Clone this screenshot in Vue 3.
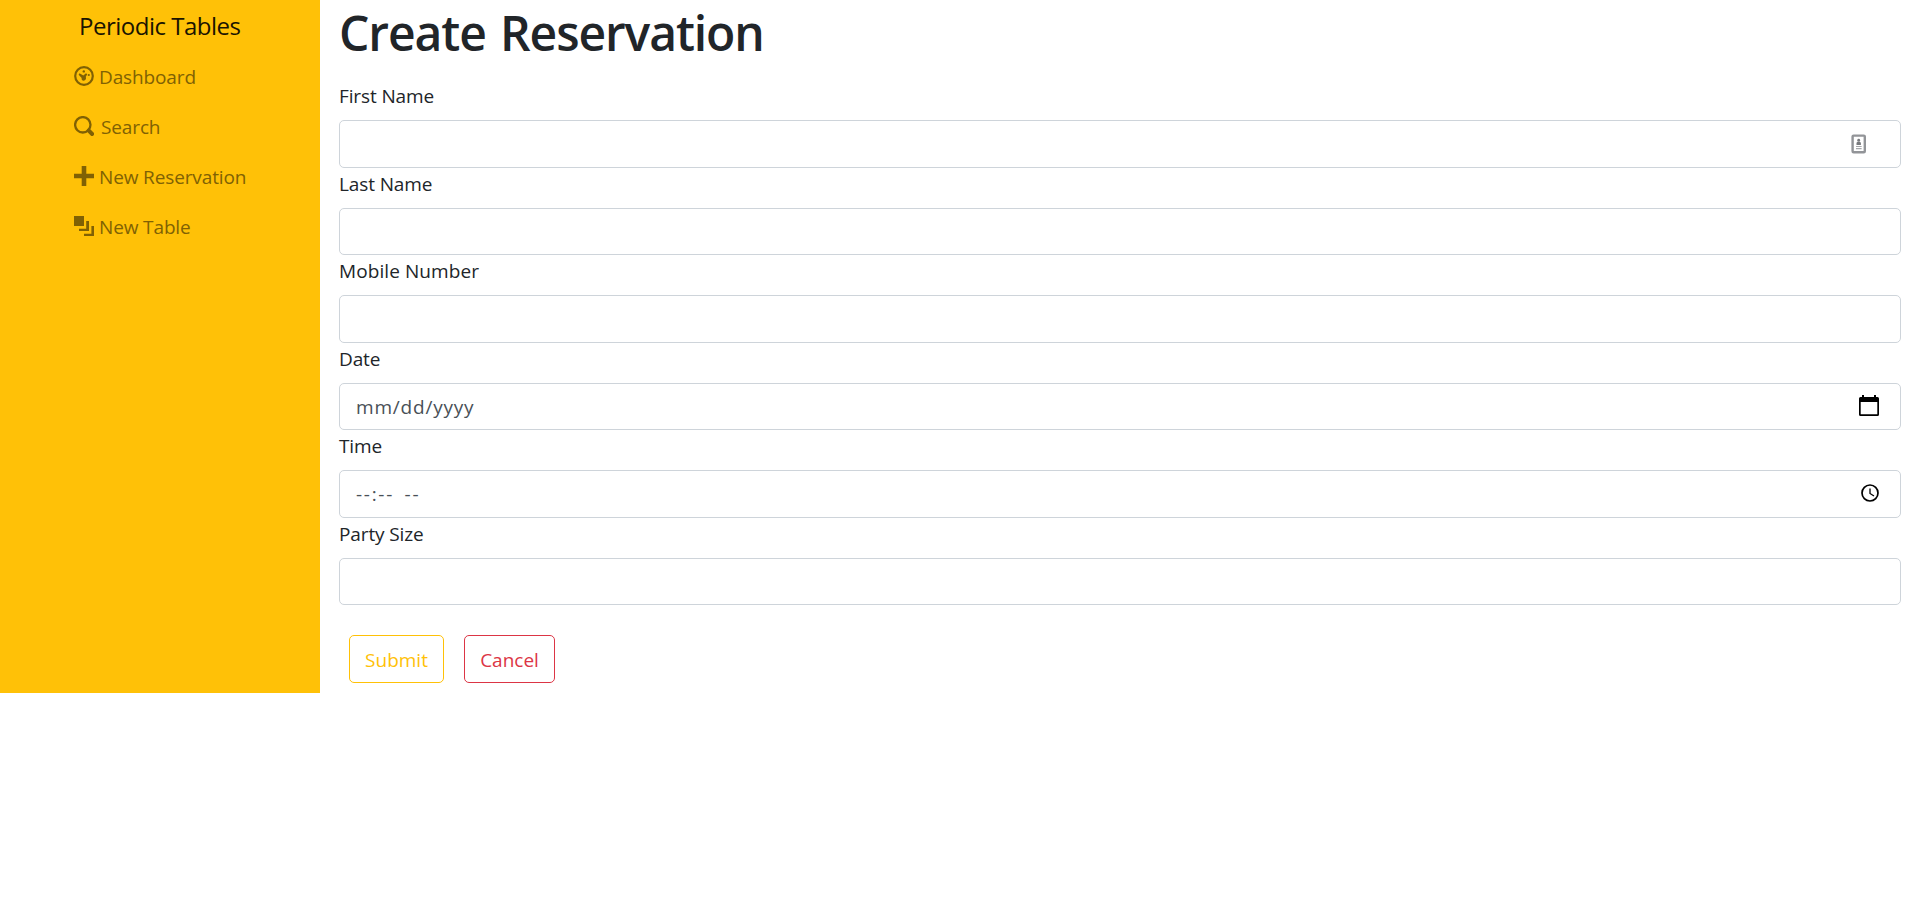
<script setup>
const fields = [
  { id: 'first', label: 'First Name', kind: 'contact' },
  { id: 'last', label: 'Last Name' },
  { id: 'mobile', label: 'Mobile Number' },
  { id: 'date', label: 'Date', kind: 'date', hint: 'mm/dd/yyyy' },
  { id: 'time', label: 'Time', kind: 'time', hint: '--:-- --' },
  { id: 'party', label: 'Party Size' },
]
</script>

<template>
  <div class="layout">
    <nav class="sidebar">
      <a class="brand"><span>Periodic Tables</span></a>
      <ul class="menu">
        <li>
          <svg class="icon" viewBox="0 0 20 20">
            <circle cx="10" cy="10" r="8.8" fill="none" stroke="currentColor" stroke-width="2.2" />
            <path d="M5.500 7.200 9.300 9.600l2.700-2.400 1.300 1.100-1.500 2.500c.8 2-.4 3.900-2.100 3.900-1.800 0-2.400-1.400-2-2.700L4.600 8.700z" fill="currentColor" />
            <circle cx="9.800" cy="5.400" r="1.200" fill="currentColor" />
            <circle cx="14.800" cy="9" r="1.100" fill="currentColor" />
          </svg>
          <span class="t-dashboard">Dashboard</span>
        </li>
        <li>
          <svg class="icon" viewBox="0 0 20 20">
            <circle cx="8.8" cy="8.8" r="7.7" fill="none" stroke="currentColor" stroke-width="2.3" />
            <path d="m14.8 14.6 3.200 3.300" stroke="currentColor" stroke-width="4.200" stroke-linecap="round" />
          </svg>
          <span class="t-search">Search</span>
        </li>
        <li>
          <svg class="icon" viewBox="0 0 20 20">
            <path d="M7.700 0h4.600v7.700H20v4.600h-7.700V20H7.700v-7.700H0V7.700h7.700z" fill="currentColor" />
          </svg>
          <span class="t-reservation">New Reservation</span>
        </li>
        <li>
          <svg class="icon" viewBox="0 0 20 20">
            <path d="M0 0h10v10H0zM12.2 5H15v10H5v-2.2h7.2zM17.4 10H20v10H10v-2.2h7.4z" fill="currentColor" />
          </svg>
          <span class="t-table">New Table</span>
        </li>
      </ul>
    </nav>

    <main class="content">
      <h1><span>Create Reservation</span></h1>
      <form @submit.prevent>
        <div v-for="f in fields" :key="f.id" class="field">
          <label :class="'l-' + f.id"><span>{{ f.label }}</span></label>
          <div class="control">
            <span class="hint" :class="'h-' + f.id">{{ f.hint }}</span>
            <svg v-if="f.kind === 'contact'" class="contact" viewBox="0 0 16 20">
              <rect x="1.6" y="1.6" width="12.2" height="16.6" rx="1" fill="#fff" stroke="#929498" stroke-width="2.4" />
              <circle cx="7.7" cy="6.2" r="1.4" fill="#77797d" />
              <path d="M5.5 11V8.8l1.3-1.2h1.8l1.3 1.2V11z" fill="#77797d" />
              <path d="M5 12.5h5.6M5 14.6h5.6" stroke="#a4a6aa" stroke-width="1.2" />
            </svg>
            <svg v-if="f.kind === 'date'" class="calendar" viewBox="0 0 20 22">
              <path d="M3 0h2v2h10V0h2v2h1.500A1.500 1.500 0 0 1 20 3.500V19.500a1.500 1.500 0 0 1-1.500 1.500h-17A1.500 1.500 0 0 1 0 19.500v-16A1.500 1.500 0 0 1 1.500 2H3zM1.700 7v12.300h16.600V7z" fill="#000" fill-rule="evenodd" />
            </svg>
            <svg v-if="f.kind === 'time'" class="clock" viewBox="0 0 18 18">
              <circle cx="9" cy="9" r="8" fill="none" stroke="#000" stroke-width="1.7" />
              <path d="M9 4.500v5l4 2.500" fill="none" stroke="#000" stroke-width="1.300" />
            </svg>
          </div>
        </div>
        <div class="actions">
          <button class="submit" type="submit"><span>Submit</span></button>
          <button class="cancel" type="button"><span>Cancel</span></button>
        </div>
      </form>
    </main>
  </div>
</template>

<style>
body {
  background: #fff;
}
</style>

<style scoped>
.layout {
  display: flex;
  height: 693px;
  font-family: 'Open Sans', 'Noto Sans', sans-serif;
  font-size: 19px;
  font-weight: 400;
  line-height: 30px;
  color: #212529;
  white-space: nowrap;
}
.sidebar {
  box-sizing: border-box;
  flex: none;
  width: 320px;
  padding: 7px 0 0 74px;
  background: #ffc107;
}
.brand {
  display: block;
  height: 38px;
  padding-left: 5px;
  font-size: 24px;
  letter-spacing: -0.5px;
  line-height: 38px;
  color: #1a1401;
}
.menu {
  margin: 6px 0 0;
  padding: 0;
  list-style: none;
  color: #806104;
}
.menu li {
  display: flex;
  align-items: center;
  height: 50px;
}
.menu span {
  padding-top: 1px;
  letter-spacing: -0.13px;
}
.icon {
  width: 20px;
  height: 20px;
  margin: 0 5.300px 0 -0.300px;
}
.menu .t-search {
  margin-left: 2px;
}
.content {
  flex: 1;
  padding: 0 19px;
}
h1 {
  height: 60px;
  margin: 0 0 20px;
  font-size: 48px;
  font-weight: 600;
  letter-spacing: -1.1px;
  word-spacing: 3px;
  line-height: 65px;
}
.field {
  height: 87.5px;
}
label {
  display: block;
  height: 30px;
  margin-bottom: 10px;
  letter-spacing: -0.12px;
  line-height: 32px;
}
.l-mobile {
  letter-spacing: 0.08px;
}
.control {
  box-sizing: border-box;
  display: flex;
  align-items: center;
  justify-content: space-between;
  height: 47.5px;
  padding: 0 16px;
  border: 1px solid #ced4da;
  border-radius: 5px;
}
.hint {
  padding-top: 1px;
  color: #495057;
}
.h-date {
  letter-spacing: 0.8px;
}
.h-time {
  letter-spacing: 1.700px;
  word-spacing: 4px;
}
.contact {
  width: 16px;
  height: 20px;
  margin-right: 17px;
}
.calendar {
  width: 20px;
  height: 22px;
  margin: 0 5px 1px 0;
}
.clock {
  width: 18px;
  height: 18px;
  margin: 0 5px 1px 0;
}
.actions {
  display: flex;
  gap: 20px;
  padding: 30px 10px 10px;
}
button {
  box-sizing: border-box;
  height: 48px;
  padding: 1px 0 0;
  border: 1px solid;
  border-radius: 5px;
  background: #fff;
  font: inherit;
}
.submit {
  width: 95px;
  color: #ffc107;
}
.cancel {
  width: 91px;
  color: #dc3545;
}
</style>
